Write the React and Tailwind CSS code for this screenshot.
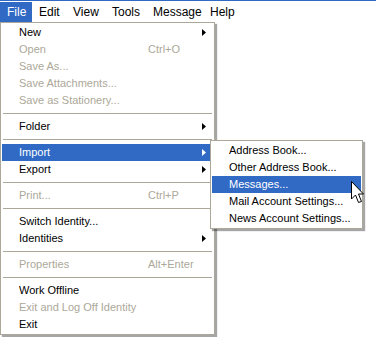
import React from 'react';

const font = { fontFamily: '"Liberation Sans", Arial, sans-serif' };

const Arrow = ({ white }) => (
    <svg width="4" height="7" viewBox="0 0 4 7" className="shrink-0">
        <path d="M0 0 L4 3.5 L0 7 Z" fill={white ? '#ffffff' : '#000000'} />
    </svg>
);

const Item = ({ label, shortcut, sub, disabled, active }) => (
    <div
        className={`flex items-center h-[17px] pl-[17px] pr-[7px] text-[11px] ${
            active ? 'bg-[#316ac5] text-white' : disabled ? 'text-[#aca899]' : 'text-black'
        }`}
    >
        <span className="flex-1 whitespace-nowrap">{label}</span>
        {shortcut && <span className="w-[58px] whitespace-nowrap">{shortcut}</span>}
        {sub && <Arrow white={active} />}
    </div>
);

const Sep = () => (
    <div className="h-[9px] flex items-center px-[1px]">
        <div className="h-px w-full bg-[#aca899]" />
    </div>
);

const Cursor = () => (
    <svg width="14" height="23" viewBox="0 0 14 23" className="absolute left-[351px] top-[181px]">
        <path
            d="M0.5 0.5 L0.5 18 L4.5 14 L7.5 21.5 L10.5 20.5 L7.5 13 L12.5 13 Z"
            fill="#ffffff"
            stroke="#000000"
            strokeWidth="1"
        />
    </svg>
);

const menus = [
    { label: 'File', w: 'w-[32px]' },
    { label: 'Edit', w: 'w-[34px]' },
    { label: 'View', w: 'w-[39px]' },
    { label: 'Tools', w: 'w-[41px]' },
    { label: 'Message', w: 'w-[57px]' },
    { label: 'Help', w: 'w-[40px]' },
];

export default function App() {
    return (
        <div className="relative w-[376px] h-[337px] bg-white overflow-hidden" style={font}>
            <div className="h-px bg-[#316ac5]" />
            <div className="flex h-[21px] items-stretch pt-[1px] text-[12px] text-black bg-white">
                {menus.map((m, i) => (
                    <div
                        key={m.label}
                        className={`flex items-center pl-[7px] ${m.w} ${i === 0 ? 'bg-[#316ac5] text-white' : ''}`}
                    >
                        {m.label}
                    </div>
                ))}
            </div>

            <div className="relative w-[217px]">
                <div className="w-[215px] border border-[#aca899] bg-white p-[1px] shadow-[2px_2px_1px_rgba(0,0,0,0.35)]">
                    <Item label="New" sub />
                    <Item label="Open" shortcut="Ctrl+O" disabled />
                    <Item label="Save As..." disabled />
                    <Item label="Save Attachments..." disabled />
                    <Item label="Save as Stationery..." disabled />
                    <Sep />
                    <Item label="Folder" sub />
                    <Sep />
                    <Item label="Import" sub active />
                    <Item label="Export" sub />
                    <Sep />
                    <Item label="Print..." shortcut="Ctrl+P" disabled />
                    <Sep />
                    <Item label="Switch Identity..." />
                    <Item label="Identities" sub />
                    <Sep />
                    <Item label="Properties" shortcut="Alt+Enter" disabled />
                    <Sep />
                    <Item label="Work Offline" />
                    <Item label="Exit and Log Off Identity" disabled />
                    <Item label="Exit" />
                </div>

                <div className="absolute left-[210px] top-[118px] w-[153px] border border-[#aca899] bg-white p-[1px] shadow-[2px_2px_1px_rgba(0,0,0,0.35)]">
                    <Item label="Address Book..." />
                    <Item label="Other Address Book..." />
                    <Item label="Messages..." active />
                    <Item label="Mail Account Settings..." />
                    <Item label="News Account Settings..." />
                </div>
            </div>

            <Cursor />
        </div>
    );
}
